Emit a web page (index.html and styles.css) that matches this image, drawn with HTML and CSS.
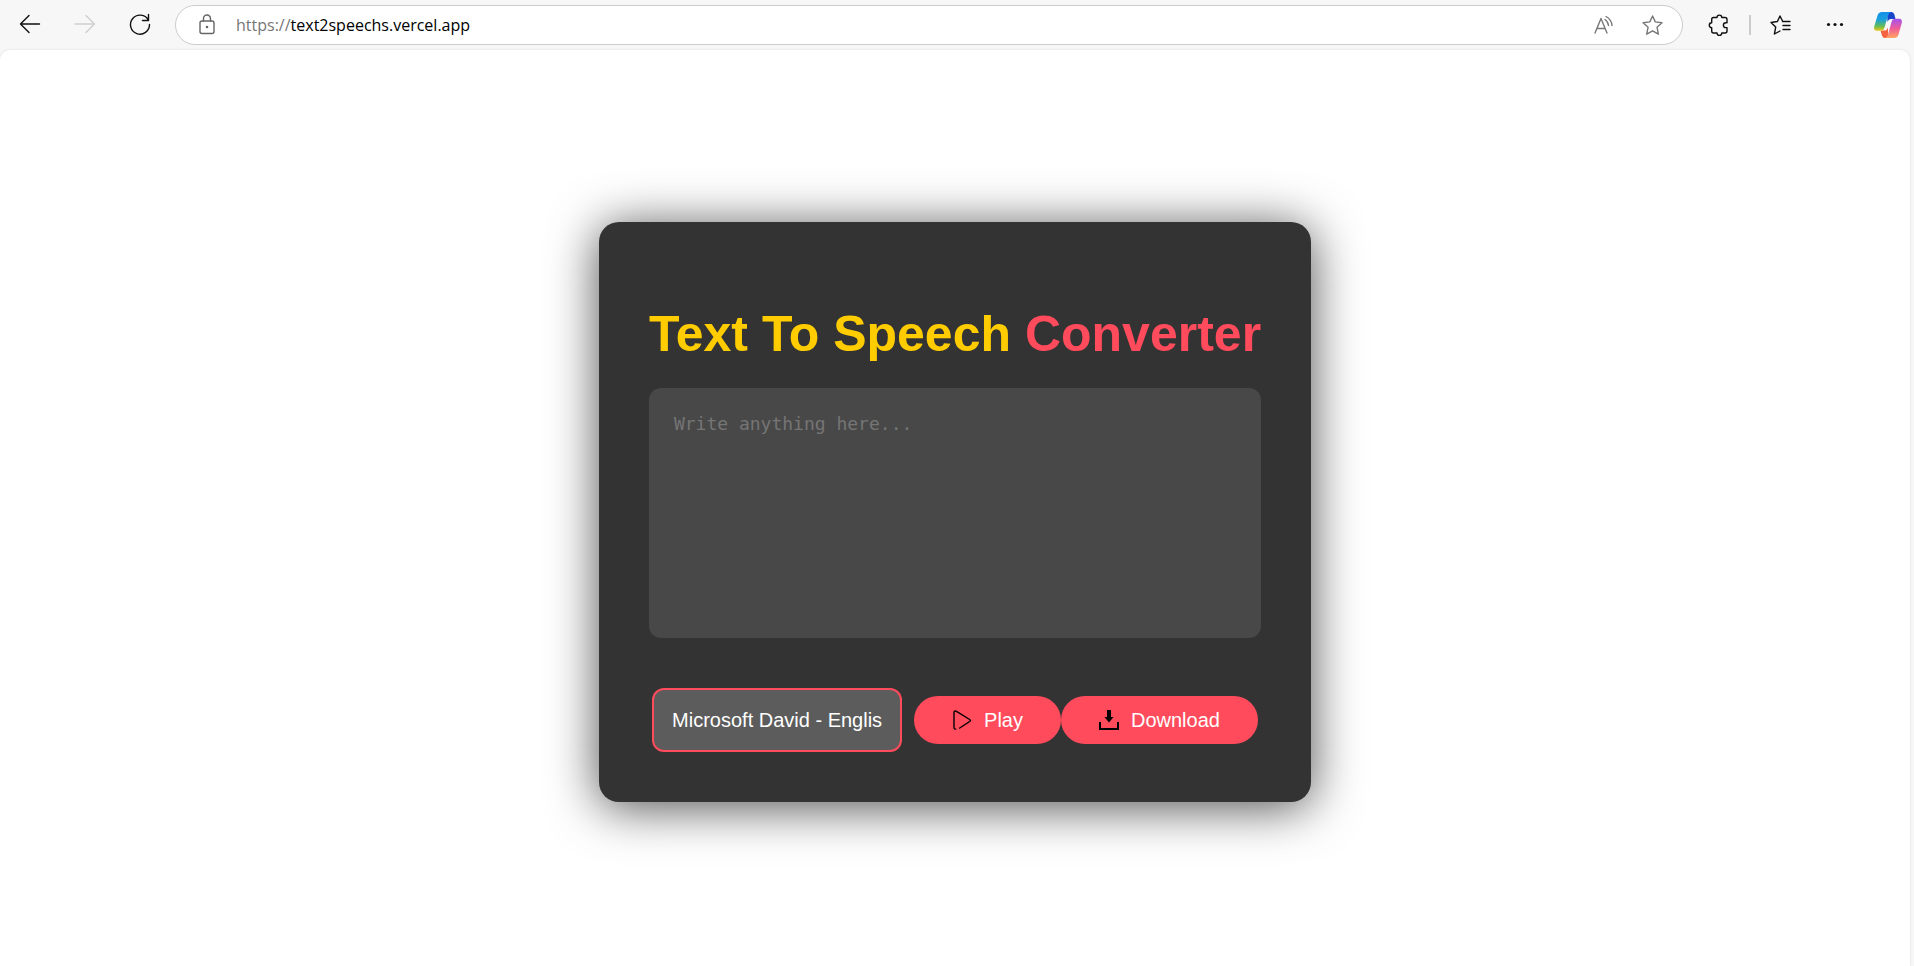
FILE: index.html
```html
<!DOCTYPE html>
<html lang="en">
<head>
<meta charset="utf-8">
<title>Text To Speech Converter</title>
<link rel="stylesheet" href="styles.css">
</head>
<body>
<header class="toolbar">
  <nav class="nav-buttons" aria-label="Navigation">
    <button class="icon-button" type="button" aria-label="Back"><svg viewBox="0 0 30 30"><path d="M24.500 14H5.500M14 5.500L5.500 14l8.500 8.500"/></svg></button>
    <button class="icon-button disabled" type="button" aria-label="Forward" disabled><svg viewBox="0 0 30 30"><path d="M5 14h19.500M16 5.500l8.500 8.500-8.500 8.500"/></svg></button>
    <button class="icon-button" type="button" aria-label="Refresh"><svg viewBox="0 0 30 30"><path d="M23.300 10A9.500 9.500 0 1 0 24.500 14.500M23.500 4.500V10.500H17.500"/></svg></button>
  </nav>
  <form class="address">
    <svg class="lock" viewBox="0 0 18 24"><rect x="2" y="8" width="14" height="12.500" rx="2"/><path d="M5.500 8V5.500a3.500 3.500 0 0 1 7 0V8"/><circle class="solid" cx="9" cy="14" r="1.300"/></svg>
    <div class="url"><span class="scheme">https://</span>text2speechs.vercel.app</div>
    <button class="icon-button muted" type="button" aria-label="Read aloud"><svg viewBox="0 0 30 30"><path d="M6 23L12 8.500 18 23M8 18.500h8M16 9.500q3 2 3.500 6M17 6.500q5.500 3 6 9"/></svg></button>
    <button class="icon-button muted" type="button" aria-label="Add to favorites"><svg viewBox="0 0 30 30"><path d="M14.600 6l2.700 5.900 6.700.8-5 4.500 1.400 7-5.800-3.400-5.900 3.400 1.400-7-5-4.500 6.700-.8z"/></svg></button>
  </form>
  <div class="tools">
    <button class="icon-button" type="button" aria-label="Extensions"><svg viewBox="0 0 30 30"><path d="M9.500 7.500H13a2.400 2.400 0 0 1 4.800 0H21q2 0 2 2v3.300h-1.200a2.400 2.400 0 0 0 0 4.800H23V21q0 2-2 2h-3.200a2.400 2.400 0 0 1-4.800 0H9.700q-2 0-2-2v-3.400a2.400 2.400 0 0 1 0-4.800V9.500q0-2 1.800-2"/></svg></button>
    <span class="divider"></span>
    <button class="icon-button" type="button" aria-label="Favorites"><svg viewBox="0 0 30 30"><path d="M17.500 11L15 6l-2.600 5.500-6.400 1 4.700 4.600-1.300 6.900 5.600-3M17.500 11.500H25M18 15.500h7M18 19.500h7"/></svg></button>
    <button class="icon-button more" type="button" aria-label="Settings and more"><svg viewBox="0 0 30 30"><g class="solid"><circle cx="8.500" cy="14.500" r="1.600"/><circle cx="15" cy="14.500" r="1.600"/><circle cx="21.500" cy="14.500" r="1.600"/></g></svg></button>
    <button class="icon-button copilot" type="button" aria-label="Copilot"><svg viewBox="0 0 30 30">
      <defs>
        <linearGradient id="cool" x1="0" y1="0" x2="0" y2="1"><stop offset="0" stop-color="#1590e8"/><stop offset=".4" stop-color="#1aa0dd"/><stop offset=".75" stop-color="#62bc55"/><stop offset="1" stop-color="#efc718"/></linearGradient>
        <linearGradient id="warm" x1="0" y1="0" x2="0" y2="1"><stop offset="0" stop-color="#a451f0"/><stop offset=".5" stop-color="#ef5c98"/><stop offset="1" stop-color="#ffa55f"/></linearGradient>
      </defs>
      <path fill="#1747c8" d="M14 2h4.500q2.200 0 2.900 2.500L22.500 9H18q-2.500 0-3.500 3z"/>
      <path fill="#f4623f" d="M7.500 20.500H12q2 0 3-3L15 28h-3q-2.200 0-3-2.500z"/>
      <path fill="url(#cool)" d="M8.800 2H18q-2 .3-3 3.500l-3.500 12q-.9 3.300-3.500 3.300H4q-3.800 0-2.700-4.500L4.500 5.500Q5.500 2 8.800 2z"/>
      <path fill="url(#warm)" d="M21.200 28H12q2-.5 3-3.500l3.500-12.500q1-3.200 3.500-3.200H26q3.800 0 2.700 4.500l-3.200 11.200Q24.500 28 21.200 28z"/>
    </svg></button>
  </div>
</header>
<main class="page">
  <section class="card">
    <h1 class="title">Text To Speech <span class="accent">Converter</span></h1>
    <textarea class="text" aria-label="Text to speak" placeholder="Write anything here..."></textarea>
    <div class="controls">
      <select class="voice" aria-label="Voice"><option>Microsoft David - Englis</option></select>
      <div class="actions">
        <button class="action" type="button"><svg viewBox="0 0 20 20"><path class="outline" d="M7.700 18L17.700 11.500q1.400-1 0-2L4.500 1.300Q2 0.300 2 2.500V17.500q0 1.900 1.800 1.600"/></svg>Play</button>
        <button class="action" type="button"><svg viewBox="0 0 20 20"><path d="M8 0h4v7h2.500L10 12.500 5.500 7H8zM0 12h2v6h16v-6h2v8H0z"/></svg>Download</button>
      </div>
    </div>
  </section>
</main>
</body>
</html>
```

FILE: styles.css
```css
* { box-sizing: border-box; }

body {
  margin: 0;
  height: 100vh;
  display: flex;
  flex-direction: column;
  overflow: hidden;
  background: #f7f7f7;
  font-family: "Liberation Sans", Arial, sans-serif;
}

button { border: 0; padding: 0; background: none; font: inherit; }

.toolbar {
  display: flex;
  align-items: center;
  height: 50px;
  flex: none;
  padding: 0 11px 0 15px;
}

.nav-buttons { display: flex; gap: 25px; margin-right: 20px; }

.icon-button { width: 30px; height: 30px; color: #111; }

.icon-button svg,
.lock {
  display: block;
  fill: none;
  stroke: currentColor;
  stroke-width: 1.4;
  stroke-linecap: round;
  stroke-linejoin: round;
}

.icon-button.disabled { color: #d0d0d0; }
.icon-button.muted { color: #777; }
.toolbar .solid { fill: currentColor; stroke: none; }
.toolbar .copilot svg { stroke: none; }

.address {
  flex: 1;
  display: flex;
  align-items: center;
  height: 40px;
  padding: 0 14px 0 22px;
  border: 1px solid #ccc;
  border-radius: 20px;
  background: #fff;
}

.lock { width: 18px; height: 24px; margin-right: 20px; color: #666; }

.url {
  flex: 1;
  color: #000;
  font-family: "Segoe UI", "Open Sans", sans-serif;
  font-size: 16px;
  line-height: 24px;
}

.scheme { color: #767676; }

.muted + .muted { margin-left: 19px; }

.tools { display: flex; align-items: center; margin-left: 21px; }
.divider { width: 2px; height: 20px; margin: 0 14px 0 15px; background: #ccc; }
.more { margin: 0 23px 0 25px; }

.page {
  flex: 1;
  display: flex;
  align-items: center;
  justify-content: center;
  margin-right: 4px;
  padding-top: 8px;
  border-radius: 10px 10px 0 0;
  background: #fff;
  box-shadow: 0 0 3px rgba(0, 0, 0, 0.1);
}

.card {
  display: flex;
  flex-direction: column;
  padding: 50px;
  border-radius: 20px;
  background: #333;
  box-shadow: 0 5px 50px rgba(0, 0, 0, 0.7);
}

.title {
  margin: 34px 0 25px;
  color: #fc0;
  font-size: 50px;
  line-height: 57px;
}

.accent { color: #ff4b5c; }

.text {
  height: 250px;
  padding: 25px;
  border: 0;
  border-radius: 12px;
  background: #484848;
  color: #fff;
  font-family: Consolas, "DejaVu Sans Mono", monospace;
  font-size: 18px;
  line-height: 22px;
  resize: none;
}

.text::placeholder { color: #757575; }

.controls {
  display: flex;
  align-items: center;
  justify-content: center;
  gap: 12px;
  margin-top: 50px;
}

.voice {
  appearance: none;
  width: 250px;
  height: 64px;
  padding: 0 18px;
  border: 2px solid #ff4b5c;
  border-radius: 12px;
  background: #5c5c5c;
  color: #fff;
  font: 20px "Liberation Sans", Arial, sans-serif;
}

.actions { display: flex; }

.action {
  display: flex;
  align-items: center;
  gap: 12px;
  height: 48px;
  padding: 0 38px;
  border-radius: 24px;
  background: #ff4b5c;
  color: #fff;
  font-size: 20px;
}

.action svg { width: 20px; height: 20px; fill: #000; }
.action .outline { fill: none; stroke: #000; stroke-width: 1.4; stroke-linecap: round; }
```
